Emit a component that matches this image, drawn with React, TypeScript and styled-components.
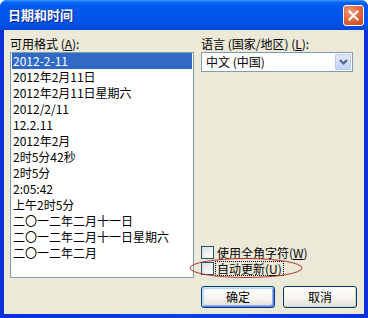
import React from "react";
import styled, { createGlobalStyle } from "styled-components";

const Global = createGlobalStyle`
  html, body { margin: 0; padding: 0; background: #ffffff; }
  body { font-family: "Noto Sans CJK SC", "Liberation Sans", sans-serif; }
`;

const Window = styled.div`
  position: relative;
  width: 368px;
  height: 318px;
  display: flex;
  flex-direction: column;
  box-sizing: border-box;
  border-radius: 7px 7px 0 0;
  overflow: hidden;
  background: #0842d8;
`;

const TitleBar = styled.div`
  height: 30px;
  flex: none;
  display: flex;
  align-items: center;
  justify-content: space-between;
  padding: 0 4px 0 8px;
  background: linear-gradient(
    to bottom,
    #3d95ff 0%,
    #0a66f4 8%,
    #0058ee 20%,
    #0055ea 50%,
    #0052e4 80%,
    #0047d6 100%
  );
`;

const Title = styled.div`
  color: #ffffff;
  font-size: 13px;
  font-weight: 700;
  line-height: 16px;
  text-shadow: 1px 1px 0 #0a1e8c;
`;

const CloseButton = styled.div`
  width: 19px;
  height: 19px;
  border: 1px solid #ffffff;
  border-radius: 3px;
  background: radial-gradient(circle at 35% 30%, #f0a080 0%, #e06a42 45%, #c8431c 100%);
  display: flex;
  align-items: center;
  justify-content: center;
`;

const Frame = styled.div`
  flex: 1;
  display: flex;
  padding: 0 4px 4px 4px;
  background: linear-gradient(to right, #0831d9, #0842e0 50%, #0831d9);
`;

const Body = styled.div`
  flex: 1;
  background: #ece9d8;
  display: grid;
  grid-template-columns: 184px 1fr;
  column-gap: 7px;
  padding: 7px 7px 6px 6px;
  font-size: 12px;
  color: #000000;
`;

const LeftCol = styled.div`
  display: flex;
  flex-direction: column;
`;

const RightCol = styled.div`
  display: flex;
  flex-direction: column;
`;

const Label = styled.div`
  height: 15px;
  line-height: 14px;
  font-size: 12px;
  white-space: nowrap;
`;

const U = styled.span`
  text-decoration: underline;
`;

const ListBox = styled.div`
  height: 226px;
  box-sizing: border-box;
  border: 1px solid #7f9db9;
  background: #ffffff;
  padding: 0 1px;
`;

const Item = styled.div<{ $selected?: boolean }>`
  height: 16px;
  line-height: 16px;
  padding-left: 1px;
  white-space: nowrap;
  background: ${(p) => (p.$selected ? "#316ac5" : "transparent")};
  color: ${(p) => (p.$selected ? "#ffffff" : "#000000")};
`;

const Select = styled.div`
  height: 20px;
  box-sizing: border-box;
  border: 1px solid #7f9db9;
  background: #ffffff;
  display: flex;
  align-items: center;
  padding: 1px;
  margin-right: 4px;
`;

const SelectText = styled.div`
  flex: 1;
  padding-left: 3px;
  line-height: 16px;
  white-space: nowrap;
`;

const ArrowButton = styled.div`
  width: 16px;
  height: 16px;
  box-sizing: border-box;
  border: 1px solid #bacbf5;
  border-radius: 1px;
  background: linear-gradient(to bottom, #dfe8fd, #c4d4f7);
  display: flex;
  align-items: center;
  justify-content: center;
`;

const Spacer = styled.div`
  flex: 1;
`;

const CheckRow = styled.div`
  position: relative;
  display: flex;
  align-items: center;
  height: 16px;
`;

const CheckBox = styled.div`
  width: 13px;
  height: 13px;
  box-sizing: border-box;
  border: 1px solid #1c5180;
  background: linear-gradient(135deg, #dcdcd7, #ffffff);
  flex: none;
`;

const CheckLabel = styled.div<{ $focus?: boolean }>`
  margin-left: 2px;
  padding: 0 1px;
  height: 13px;
  line-height: 13px;
  white-space: nowrap;
  outline: ${(p) => (p.$focus ? "1px dotted #000000" : "none")};
`;

const Ellipse = styled.svg`
  position: absolute;
  left: -13px;
  top: -3px;
  pointer-events: none;
`;

const ButtonRow = styled.div`
  display: flex;
  justify-content: space-between;
  margin-top: 10px;
`;

const Button = styled.div<{ $default?: boolean }>`
  width: 74px;
  height: 22px;
  box-sizing: border-box;
  border: 1px solid #003c74;
  border-radius: 3px;
  background: linear-gradient(to bottom, #ffffff 0%, #f4f3ee 60%, #e3e0d2 100%);
  box-shadow: ${(p) =>
    p.$default
      ? "inset 1px 1px 0 #cee7ff, inset -1px -1px 0 #6982ee, inset 2px 2px 0 #bcd4f6, inset -2px -2px 0 #89adf4"
      : "inset -1px -1px 0 #d6d0c5"};
  display: flex;
  align-items: center;
  justify-content: center;
  font-size: 12px;
  line-height: 14px;
`;

const formats = [
  "2012-2-11",
  "2012年2月11日",
  "2012年2月11日星期六",
  "2012/2/11",
  "12.2.11",
  "2012年2月",
  "2时5分42秒",
  "2时5分",
  "2:05:42",
  "上午2时5分",
  "二〇一二年二月十一日",
  "二〇一二年二月十一日星期六",
  "二〇一二年二月",
];

export default function App() {
  return (
    <>
      <Global />
      <Window>
        <TitleBar>
          <Title>日期和时间</Title>
          <CloseButton>
            <svg width="11" height="11" viewBox="0 0 11 11">
              <path d="M1.5 1.5 L9.5 9.5 M9.5 1.5 L1.5 9.5" stroke="#ffffff" strokeWidth="2" strokeLinecap="square" />
            </svg>
          </CloseButton>
        </TitleBar>
        <Frame>
          <Body>
            <LeftCol>
              <Label>
                可用格式 (<U>A</U>):
              </Label>
              <ListBox>
                {formats.map((f, i) => (
                  <Item key={f} $selected={i === 0}>
                    {f}
                  </Item>
                ))}
              </ListBox>
            </LeftCol>
            <RightCol>
              <Label>
                语言 (国家/地区) (<U>L</U>):
              </Label>
              <Select>
                <SelectText>中文 (中国)</SelectText>
                <ArrowButton>
                  <svg width="9" height="6" viewBox="0 0 9 6">
                    <path d="M1 1 L4.5 4.5 L8 1" stroke="#4d6185" strokeWidth="2" fill="none" />
                  </svg>
                </ArrowButton>
              </Select>
              <Spacer />
              <CheckRow>
                <CheckBox />
                <CheckLabel>
                  使用全角字符(<U>W</U>)
                </CheckLabel>
              </CheckRow>
              <CheckRow>
                <CheckBox />
                <CheckLabel $focus>
                  自动更新(<U>U</U>)
                </CheckLabel>
                <Ellipse width="116" height="22" viewBox="0 0 116 22">
                  <ellipse cx="58" cy="11" rx="56" ry="9.5" fill="none" stroke="#b8332a" strokeWidth="1" />
                </Ellipse>
              </CheckRow>
              <ButtonRow>
                <Button $default>确定</Button>
                <Button>取消</Button>
              </ButtonRow>
            </RightCol>
          </Body>
        </Frame>
      </Window>
    </>
  );
}
